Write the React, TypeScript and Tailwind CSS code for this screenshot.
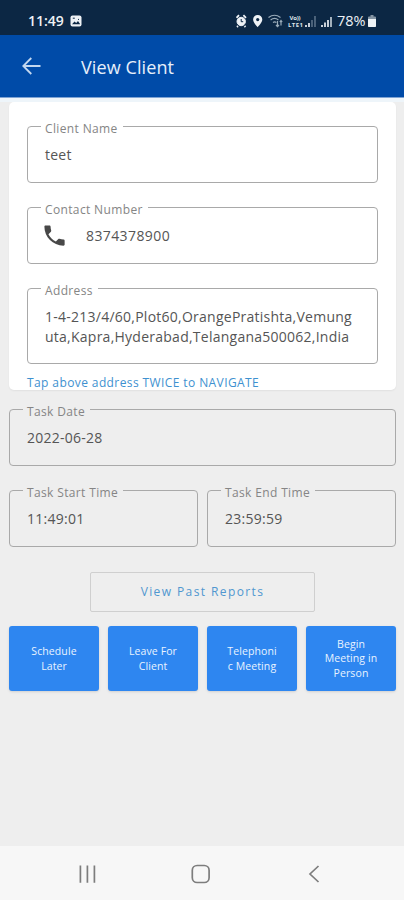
import type { ReactNode } from 'react';
import clsx from 'clsx';
import { MdPhone } from 'react-icons/md';

interface FieldProps {
  label: string;
  children: ReactNode;
  className?: string;
}

function Field({ label, children, className }: FieldProps) {
  return (
    <fieldset className={clsx('min-w-0 rounded-[4px] border border-[#a9a9a9] pl-[13px]', className)}>
      <legend className="h-[18px] whitespace-nowrap pl-1 pr-[5px] pt-[4px] text-[12px] leading-[15px] tracking-[0.36px] text-[#858585]">
        {label}
      </legend>
      <div className="pl-1 text-[14px] leading-[20px] tracking-[0.25px] text-[#555]">{children}</div>
    </fieldset>
  );
}

function StatusBar() {
  return (
    <div className="flex h-[35px] shrink-0 items-center bg-[#0c2744] pt-[6px] text-[#eef2f6]">
      <span className="ml-[28px] w-[42px] text-[14px] font-semibold leading-[20px]">11:49</span>
      <svg width="12" height="12" viewBox="0 0 12 12">
        <rect x="0.5" y="0.5" width="11" height="11" rx="2" fill="#eef2f6" />
        <path d="M2 9.3 4.5 6.5 6.2 8 8 6l2.2 3.3z" fill="#0c2744" />
        <path d="M2.8 3.2h2M8 4.4h1" stroke="#0c2744" />
      </svg>
      <svg className="ml-[154px] shrink-0" width="98" height="14" viewBox="0 0 98 14" fill="none">
        <g stroke="#eef2f6">
          <circle cx="5.2" cy="7.5" r="4.2" fill="#eef2f6" />
          <path d="M.5 3.8 3 1.2M10 3.8 7.4 1.2M2 12l-1 1M8.5 12l1 1" strokeWidth="1.8" />
          <path d="M5.2 5v2.7h2" stroke="#0c2744" />
        </g>
        <path d="M21.7 1a4.6 4.6 0 0 0-4.6 4.6c0 3.2 4.6 7.6 4.6 7.6s4.6-4.4 4.6-7.6A4.6 4.6 0 0 0 21.7 1z" fill="#eef2f6" />
        <circle cx="21.7" cy="5.6" r="1.6" fill="#0c2744" />
        <g stroke="#9aabb9" strokeWidth="1.2">
          <path d="M32.5 3.5c4-3 8-3 12 0M34.6 6c2.6-2 5.3-2 7.8 0M37 8.4c1.2-.8 2.2-.8 3.4 0" />
          <path d="M41.5 7v5.5M40 11l1.5 1.6L43 11M45 11.5V6.5M43.8 8 45 6.5 46.2 8" />
        </g>
        <text x="53.5" y="6.4" fill="#dce3e9" className="text-[6px] font-bold" textLength="11">Vo))</text>
        <text x="52" y="13" fill="#dce3e9" className="text-[6px] font-bold" textLength="15">LTE1</text>
        <path d="M70 13v-2M73 13V9" stroke="#dce3e9" strokeWidth="1.8" />
        <path d="M76 13V6M79 13V2" stroke="#526980" strokeWidth="1.8" />
        <path d="M86 13v-2M89 13V8.5M92 13V6" stroke="#dce3e9" strokeWidth="1.8" />
        <path d="M95 13V3" stroke="#b4c0ca" strokeWidth="1.8" />
      </svg>
      <span className="ml-[3px] w-[31px] shrink-0 whitespace-nowrap text-[14.5px] font-medium leading-[20px]">78%</span>
      <svg className="shrink-0" width="8" height="12" viewBox="0 0 8 12">
        <path d="M2.5 0h3v1.5H7q1 0 1 1V11q0 1-1 1H1q-1 0-1-1V2.5q0-1 1-1h1.5z" fill="#8494a3" />
        <path d="M0 4h8v7q0 1-1 1H1q-1 0-1-1z" fill="#eef2f6" />
      </svg>
    </div>
  );
}

function ActionButton({ lines }: { lines: string[] }) {
  return (
    <button className="flex h-[65px] flex-1 flex-col items-center justify-center rounded-[3px] bg-[#2e86f0] text-[10.5px] font-medium leading-[14.6px] tracking-[0.1px] text-[#e9f3ff] shadow-sm">
      {lines.map((line) => (
        <span key={line} className="whitespace-nowrap">{line}</span>
      ))}
    </button>
  );
}

const actions = [
  ['Schedule', 'Later'],
  ['Leave For', 'Client'],
  ['Telephoni', 'c Meeting'],
  ['Begin', 'Meeting in', 'Person'],
];

export default function App() {
  return (
    <div className="flex h-[900px] w-[404px] flex-col overflow-hidden bg-[#eeeeee] font-['Open_Sans',sans-serif]">
      <StatusBar />
      <header className="flex h-[63px] shrink-0 items-center border-b border-[#7fa3d3] bg-[#004ba8]">
        <svg className="ml-[22px]" width="19" height="18" viewBox="0 0 19 18" fill="none" stroke="#c3d8f0" strokeWidth="1.8">
          <path d="M18.5 9H1.5M9.3 1 1.3 9l8 8" />
        </svg>
        <h1 className="ml-[40px] pt-[2px] text-[18px] leading-[24px] tracking-[0.1px] text-[#e6effa]">View Client</h1>
      </header>

      <main className="flex-1 border-t-4 border-[#eef5fa] pl-[9px] pr-[8px]">
        <section className="h-[288px] rounded-[5px] bg-white px-[18px] pt-[15px] shadow-[0_1px_2px_rgba(0,0,0,0.06)]">
          <Field label="Client Name" className="h-[66px]">
            <p className="pt-[10px]">teet</p>
          </Field>
          <Field label="Contact Number" className="mt-[15px] h-[66px]">
            <div className="flex items-center pt-[6px] tracking-[0.4px]">
              <MdPhone className="-ml-[4px] mr-[18px] size-[27px] text-[#484848]" />
              8374378900
            </div>
          </Field>
          <Field label="Address" className="mt-[15px] h-[85px]">
            <p className="whitespace-nowrap pt-[10px]">1-4-213/4/60,Plot60,OrangePratishta,Vemung</p>
            <p className="whitespace-nowrap">uta,Kapra,Hyderabad,Telangana500062,India</p>
          </Field>
          <p className="mt-[11px] text-[12px] leading-[16px] tracking-[0.4px] text-[#3e91d0]">Tap above address TWICE to NAVIGATE</p>
        </section>

        <Field label="Task Date" className="mt-[10px] h-[66px]">
          <p className="pt-[10px]">2022-06-28</p>
        </Field>
        <div className="mt-[15px] flex gap-[9px]">
          <Field label="Task Start Time" className="h-[66px] flex-1">
            <p className="pt-[10px]">11:49:01</p>
          </Field>
          <Field label="Task End Time" className="h-[66px] flex-1">
            <p className="pt-[10px]">23:59:59</p>
          </Field>
        </div>

        <button className="mx-auto mt-[25px] block h-[40px] w-[225px] rounded-[2px] border border-[#cfcfcf] text-[12px] font-medium tracking-[1.4px] text-[#5097d0]">
          View Past Reports
        </button>
        <div className="mt-[14px] flex gap-[9px]">
          {actions.map((lines) => (
            <ActionButton key={lines[0]} lines={lines} />
          ))}
        </div>
      </main>

      <nav className="flex h-[54px] shrink-0 items-center bg-[#f7f7f7]">
        <svg width="404" height="54" viewBox="0 0 404 54" fill="none" stroke="#7d7d7d" strokeWidth="1.7">
          <path d="M80.4 19.5v17.2M87.4 19.5v17.2M94.4 19.5v17.2" />
          <rect x="192.3" y="19.5" width="16.8" height="17" rx="4.8" />
          <path d="m318.5 20-8.5 8 8.5 8" />
        </svg>
      </nav>
    </div>
  );
}
